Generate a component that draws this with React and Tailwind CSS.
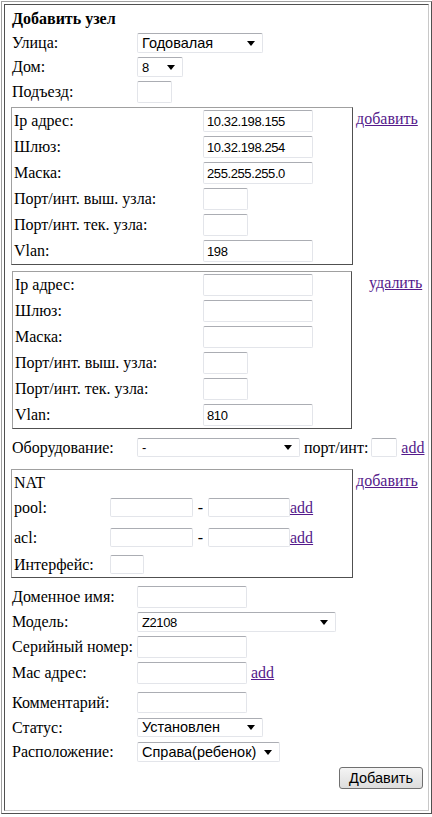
import React from 'react';

const Field = ({ className = '', value = '' }) => (
  <input
    type="text"
    readOnly
    defaultValue={value}
    className={`shrink-0 border border-[#e3e5ea] border-t-[#abadb3] rounded-[2px] bg-white pl-[3px] text-[13px] tracking-[-0.4px] text-black font-['Liberation_Sans',sans-serif] outline-none ${className}`}
  />
);

// cyrillic values in the select font look wider than digits, so they get a bigger size
const Select = ({ className = '', value, cyr = false }) => (
  <div
    className={`shrink-0 flex items-center justify-between border border-[#e3e5ea] border-t-[#abadb3] rounded-[2px] bg-white pl-[4px] pr-[7px] text-black font-['Liberation_Sans',sans-serif] ${cyr ? 'text-[14.5px]' : 'text-[13px] tracking-[-0.4px]'} ${className}`}
  >
    <span className="whitespace-nowrap leading-none">{value}</span>
    <svg width="8" height="5" viewBox="0 0 8 5" className="shrink-0">
      <polygon points="0,0 8,0 4,5" fill="#000" />
    </svg>
  </div>
);

const Link = ({ children, className = '' }) => (
  <a href="#" className={`text-[#551a8b] underline whitespace-nowrap ${className}`}>
    {children}
  </a>
);

const Row = ({ label, className = '', labelWidth = 'w-[125px]', children }) => (
  <div className={`flex items-center ${className}`}>
    <div className={`shrink-0 whitespace-nowrap ${labelWidth}`}>{label}</div>
    {children}
  </div>
);

const NetBox = ({ data, className = '', labelWidth }) => {
  const rows = [
    ['Ip адрес:', data.ip, 'w-[110px]'],
    ['Шлюз:', data.gw, 'w-[110px]'],
    ['Маска:', data.mask, 'w-[110px]'],
    ['Порт/инт. выш. узла:', '', 'w-[45px]'],
    ['Порт/инт. тек. узла:', '', 'w-[45px]'],
    ['Vlan:', data.vlan, 'w-[110px]'],
  ];
  return (
    <div
      className={`shrink-0 border border-[#a0a0a0] border-r-[#505050] border-b-[#505050] pl-[2px] pt-[2px] pb-[2px] flex flex-col gap-[4px] ${className}`}
    >
      {rows.map(([label, value, w]) => (
        <Row key={label} label={label} labelWidth={labelWidth} className="h-[22px]">
          <Field value={value} className={`h-[22px] ${w}`} />
        </Row>
      ))}
    </div>
  );
};

export default function App() {
  return (
    <div className="w-[432px] h-[817px] bg-white pt-px pl-px font-['Liberation_Serif',serif] text-[16px] text-black leading-[18px]">
      <div className="w-[431px] h-[813px] border border-[#a0a0a0] border-r-[#505050] border-b-[#505050] p-[2px]">
        <div className="h-full border border-[#505050] border-r-[#c8c8c8] border-b-[#c8c8c8] flex flex-col">
          <div className="h-[28px] flex items-center pl-[7px] font-bold">Добавить узел</div>

          <div className="pl-[7px] flex flex-col">
            <Row label="Улица:" className="h-[20px]">
              <Select value="Годовалая" cyr className="w-[126px] h-[20px]" />
            </Row>
            <Row label="Дом:" className="h-[20px] mt-[4px]">
              <Select value="8" className="w-[46px] h-[20px]" />
            </Row>
            <Row label="Подъезд:" className="h-[22px] mt-[4px]">
              <Field className="w-[35px] h-[22px]" />
            </Row>
          </div>

          <div className="flex items-start mt-[4px] ml-[6px]">
            <NetBox
              className="w-[342px]"
              labelWidth="w-[189px]"
              data={{ ip: '10.32.198.155', gw: '10.32.198.254', mask: '255.255.255.0', vlan: '198' }}
            />
            <Link className="ml-[3px] mt-[3px]">добавить</Link>
          </div>

          <div className="flex items-start mt-[6px] ml-[7px]">
            <NetBox
              className="w-[340px]"
              labelWidth="w-[188px]"
              data={{ ip: '', gw: '', mask: '', vlan: '810' }}
            />
            <Link className="ml-[17px] mt-[3px]">удалить</Link>
          </div>

          <div className="pl-[7px] mt-[9px]">
            <Row label="Оборудование:" className="h-[19px]">
              <Select value="-" className="w-[163px] h-[19px]" />
              <span className="ml-[4px] whitespace-nowrap">порт/инт:</span>
              <Field className="w-[26px] h-[19px] ml-[3px]" />
              <Link className="ml-[4px]">add</Link>
            </Row>
          </div>

          <div className="flex items-start mt-[12px] ml-[6px]">
            <div className="shrink-0 w-[342px] border border-[#a0a0a0] border-r-[#505050] border-b-[#505050] pl-[2px] pb-[3px] flex flex-col">
              <div className="h-[26px] flex items-center">NAT</div>
              <Row label="pool:" labelWidth="w-[96px]" className="h-[19px] mt-[2px]">
                <Field className="w-[83px] h-[19px]" />
                <span className="w-[15px] text-center">-</span>
                <Field className="w-[82px] h-[19px]" />
                <Link>add</Link>
              </Row>
              <Row label="acl:" labelWidth="w-[96px]" className="h-[19px] mt-[11px]">
                <Field className="w-[83px] h-[19px]" />
                <span className="w-[15px] text-center">-</span>
                <Field className="w-[82px] h-[19px]" />
                <Link>add</Link>
              </Row>
              <Row label="Интерфейс:" labelWidth="w-[96px]" className="h-[19px] mt-[8px]">
                <Field className="w-[34px] h-[19px]" />
              </Row>
            </div>
            <Link className="ml-[3px] mt-[3px]">добавить</Link>
          </div>

          <div className="pl-[7px] flex flex-col">
            <Row label="Доменное имя:" className="h-[22px] mt-[8px]">
              <Field className="w-[110px] h-[22px]" />
            </Row>
            <Row label="Модель:" className="h-[20px] mt-[4px]">
              <Select value="Z2108" className="w-[199px] h-[20px]" />
            </Row>
            <Row label="Серийный номер:" className="h-[22px] mt-[4px]">
              <Field className="w-[110px] h-[22px]" />
            </Row>
            <Row label="Мас адрес:" className="h-[22px] mt-[4px]">
              <Field className="w-[110px] h-[22px]" />
              <Link className="ml-[4px]">add</Link>
            </Row>
            <Row label="Комментарий:" className="h-[21px] mt-[8px]">
              <Field className="w-[110px] h-[21px]" />
            </Row>
            <Row label="Статус:" className="h-[19px] mt-[5px]">
              <Select value="Установлен" cyr className="w-[126px] h-[19px]" />
            </Row>
            <Row label="Расположение:" className="h-[20px] mt-[5px]">
              <Select value="Справа(ребенок)" cyr className="w-[143px] h-[20px]" />
            </Row>
          </div>

          <div className="flex justify-end mt-[5px] pr-[5px]">
            <button
              type="button"
              className="w-[84px] h-[22px] border border-[#707070] rounded-[3px] bg-gradient-to-b from-[#f4f4f4] to-[#dddddd] text-[14.5px] leading-none text-black font-['Liberation_Sans',sans-serif]"
            >
              Добавить
            </button>
          </div>
        </div>
      </div>
    </div>
  );
}
